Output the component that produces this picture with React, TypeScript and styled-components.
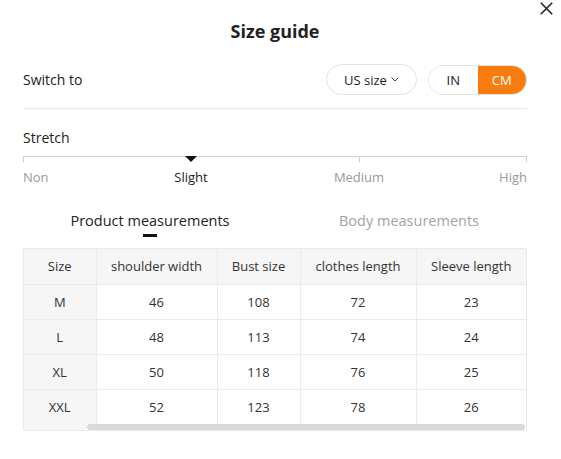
import React from 'react';
import styled, { createGlobalStyle } from 'styled-components';

const Global = createGlobalStyle`
  html, body { margin: 0; padding: 0; background: #fff; }
  body {
    font-family: "Open Sans", "Noto Sans", "Liberation Sans", sans-serif;
    color: #222;
    -webkit-font-smoothing: antialiased;
  }
  * { box-sizing: border-box; }
`;

const Dialog = styled.div`
  position: relative;
  width: 561px;
  height: 459px;
  padding: 18px 34px 0 23px;
  background: #fff;
`;

const CloseButton = styled.button`
  position: absolute;
  top: 0;
  right: 6px;
  width: 18px;
  height: 17px;
  padding: 0;
  border: 0;
  background: transparent;
  display: flex;
  align-items: center;
  justify-content: center;
  cursor: pointer;
`;

const Title = styled.h1`
  margin: 0;
  font-size: 18px;
  font-weight: 700;
  line-height: 26px;
  text-align: center;
  color: #222;
`;

const SwitchRow = styled.div`
  margin-top: 20px;
  padding-bottom: 13px;
  border-bottom: 1px solid #e6e6e6;
  display: flex;
  align-items: center;
  justify-content: space-between;
`;

const Label = styled.span`
  font-size: 14px;
  color: #222;
`;

const Controls = styled.div`
  display: flex;
  align-items: center;
  gap: 11px;
`;

const SelectButton = styled.button`
  height: 31px;
  width: 91px;
  border: 1px solid #e3e3e3;
  border-radius: 16px;
  background: #fff;
  font-family: inherit;
  font-size: 13px;
  color: #222;
  display: flex;
  align-items: center;
  justify-content: center;
  gap: 4px;
  padding: 0;
`;

const Toggle = styled.div`
  display: flex;
  height: 30px;
  width: 99px;
  border: 1px solid #e3e3e3;
  border-radius: 15px;
  overflow: hidden;
`;

const ToggleOption = styled.button<{ $active?: boolean }>`
  flex: 1;
  border: 0;
  padding: 0;
  font-family: inherit;
  font-size: 13px;
  background: ${p => (p.$active ? '#f97c10' : '#fff')};
  color: ${p => (p.$active ? '#fff' : '#222')};
`;

const StretchTitle = styled.div`
  margin-top: 19px;
  font-size: 14px;
  line-height: 20px;
  color: #222;
`;

const Scale = styled.div`
  position: relative;
  margin-top: 8px;
  height: 6px;
  border-top: 1px solid #cfcfcf;
  border-left: 1px solid #cfcfcf;
  border-right: 1px solid #cfcfcf;
`;

const Tick = styled.span`
  position: absolute;
  top: 0;
  width: 1px;
  height: 5px;
  background: #cfcfcf;
`;

const Marker = styled.span`
  position: absolute;
  top: -1px;
  width: 0;
  height: 0;
  margin-left: -6px;
  border-left: 6px solid transparent;
  border-right: 6px solid transparent;
  border-top: 6px solid #111;
`;

const ScaleLabels = styled.div`
  display: grid;
  grid-template-columns: repeat(6, 1fr);
  margin-top: 6px;
  font-size: 13px;
  line-height: 18px;
`;

const ScaleLabel = styled.span<{ $active?: boolean; $col: string; $align: string }>`
  grid-column: ${p => p.$col};
  text-align: ${p => p.$align};
  color: ${p => (p.$active ? '#222' : '#9a9a9a')};
`;

const Tabs = styled.div`
  margin-top: 25px;
  display: grid;
  grid-template-columns: 254px 1fr;
`;

const Tab = styled.div<{ $active?: boolean; $shift?: number }>`
  display: flex;
  flex-direction: column;
  align-items: center;
  padding-left: ${p => p.$shift ?? 0}px;
  font-size: 14.5px;
  line-height: 20px;
  color: ${p => (p.$active ? '#222' : '#a3a3a3')};
  &::after {
    content: '';
    display: block;
    margin-top: 3px;
    width: 14px;
    height: 3px;
    background: ${p => (p.$active ? '#111' : 'transparent')};
  }
`;

const TableWrap = styled.div`
  margin-top: 11px;
  border: 1px solid #e8e8e8;
  border-radius: 2px;
  overflow: hidden;
  position: relative;
`;

const Table = styled.table`
  width: 100%;
  border-collapse: collapse;
  table-layout: fixed;
`;

const Th = styled.th<{ $w: number }>`
  width: ${p => p.$w}px;
  height: 35px;
  padding: 0;
  background: #f6f6f6;
  font-weight: 400;
  font-size: 13px;
  color: #333;
  text-align: center;
  border-left: 1px solid #ebebeb;
  &:first-child { border-left: 0; }
`;

const Td = styled.td<{ $head?: boolean }>`
  height: 35px;
  padding: 0;
  text-align: center;
  font-size: 13px;
  color: #333;
  background: ${p => (p.$head ? '#f6f6f6' : '#fff')};
  border-top: 1px solid #ebebeb;
  border-left: 1px solid #ebebeb;
  &:first-child { border-left: 0; }
`;

const ScrollTrack = styled.div`
  height: 6px;
  display: flex;
  background: #fff;
`;

const ScrollLead = styled.div`
  width: 63px;
  background: #f6f6f6;
`;

const ScrollThumb = styled.div`
  flex: 1;
  margin-right: 1px;
  background: #dadada;
  border-radius: 3px;
`;

const columns = [
  { key: 'size', label: 'Size', w: 72 },
  { key: 'shoulder', label: 'shoulder width', w: 121 },
  { key: 'bust', label: 'Bust size', w: 83 },
  { key: 'length', label: 'clothes length', w: 116 },
  { key: 'sleeve', label: 'Sleeve length', w: 110 },
];

const rows = [
  ['M', 46, 108, 72, 23],
  ['L', 48, 113, 74, 24],
  ['XL', 50, 118, 76, 25],
  ['XXL', 52, 123, 78, 26],
];

const stretchLevel = 1 / 3;

export default function App() {
  return (
    <>
      <Global />
      <Dialog>
        <CloseButton aria-label="Close">
          <svg width="13" height="13" viewBox="0 0 13 13">
            <path d="M0.8 0.8 L12.2 12.2 M12.2 0.8 L0.8 12.2" stroke="#222" strokeWidth="1.6" fill="none" />
          </svg>
        </CloseButton>
        <Title>Size guide</Title>
        <SwitchRow>
          <Label>Switch to</Label>
          <Controls>
            <SelectButton>
              US size
              <svg width="8" height="5" viewBox="0 0 8 5">
                <path d="M0.6 0.6 L4 4 L7.4 0.6" stroke="#444" strokeWidth="1" fill="none" />
              </svg>
            </SelectButton>
            <Toggle>
              <ToggleOption>IN</ToggleOption>
              <ToggleOption $active>CM</ToggleOption>
            </Toggle>
          </Controls>
        </SwitchRow>
        <StretchTitle>Stretch</StretchTitle>
        <Scale>
          <Tick style={{ left: `${(2 / 3) * 100}%` }} />
          <Marker style={{ left: `${stretchLevel * 100}%` }} />
        </Scale>
        <ScaleLabels>
          <ScaleLabel $col="1 / 2" $align="left">Non</ScaleLabel>
          <ScaleLabel $col="2 / 4" $align="center" $active>Slight</ScaleLabel>
          <ScaleLabel $col="4 / 6" $align="center">Medium</ScaleLabel>
          <ScaleLabel $col="6 / 7" $align="right">High</ScaleLabel>
        </ScaleLabels>
        <Tabs>
          <Tab $active>Product measurements</Tab>
          <Tab $shift={14}>Body measurements</Tab>
        </Tabs>
        <TableWrap>
          <Table>
            <thead>
              <tr>
                {columns.map(c => (
                  <Th key={c.key} $w={c.w}>{c.label}</Th>
                ))}
              </tr>
            </thead>
            <tbody>
              {rows.map(r => (
                <tr key={String(r[0])}>
                  {r.map((v, i) => (
                    <Td key={i} $head={i === 0}>{v}</Td>
                  ))}
                </tr>
              ))}
            </tbody>
          </Table>
          <ScrollTrack>
            <ScrollLead />
            <ScrollThumb />
          </ScrollTrack>
        </TableWrap>
      </Dialog>
    </>
  );
}
